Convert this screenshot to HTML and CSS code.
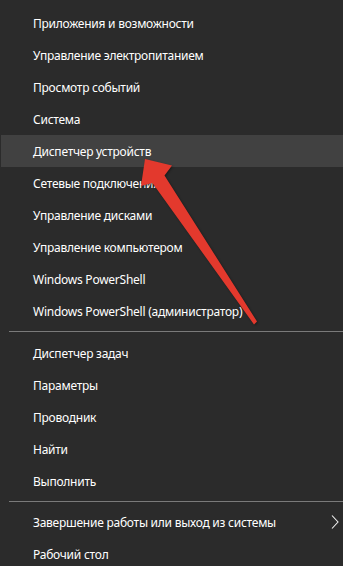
FILE: index.html
```html
<!DOCTYPE html>
<html lang="ru">

<head>
    <meta charset="UTF-8">
    <meta name="viewport" content="width=device-width, initial-scale=1.0">
    <title>Меню Win+X</title>
    <link rel="stylesheet" href="styles.css">
</head>

<body>
    <div class="menu-wrap">
        <section class="menu-group">
            <div class="menu-item">Приложения и возможности</div>
            <div class="menu-item">Управление электропитанием</div>
            <div class="menu-item">Просмотр событий</div>
            <div class="menu-item">Система</div>
            <div class="menu-item active-item">Диспетчер устройств</div>
            <div class="menu-item">Сетевые подключения</div>
            <div class="menu-item">Управление дисками</div>
            <div class="menu-item">Управление компьютером</div>
            <div class="menu-item">Windows PowerShell</div>
            <div class="menu-item">Windows PowerShell (администратор)</div>
        </section>
        <hr class="menu-sep">
        <section class="menu-group">
            <div class="menu-item">Диспетчер задач</div>
            <div class="menu-item">Параметры</div>
            <div class="menu-item">Проводник</div>
            <div class="menu-item">Найти</div>
            <div class="menu-item">Выполнить</div>
        </section>
        <hr class="menu-sep menu-sep-last">
        <section class="menu-group">
            <div class="menu-item">
                <span>Завершение работы или выход из системы</span>
                <svg class="sub-icon" width="8" height="14" viewBox="0 0 8 14">
                    <path d="M1 0.5 L7 7 L1 13.5" fill="none" stroke="#f2f2f2" stroke-width="1.1" />
                </svg>
            </div>
            <div class="menu-item">Рабочий стол</div>
        </section>

        <svg class="pointer-arrow" width="343" height="566" viewBox="0 0 343 566">
            <polygon
                points="145,159 172,165.5 164.5,175.5 257,321.5 254,324.5 152.5,183 141,186"
                fill="#e3392d" />
        </svg>
    </div>
</body>

</html>
```

FILE: styles.css
```css
html,
body {
    padding: 0;
    margin: 0;

    height: 100%;
    width: 100%;
    overflow: hidden;
}

body {
    background-color: #2b2b2b;
    font-family: "Noto Sans", "Open Sans", sans-serif;
    font-size: 12px;
    letter-spacing: -0.25px;
    color: #ffffff;
}

.menu-wrap {
    position: relative;
    height: 100%;
    padding-top: 7px;
    box-sizing: border-box;
}

.menu-item {
    display: flex;
    align-items: center;
    justify-content: space-between;

    height: 32px;
    margin-left: 1px;
    padding-left: 32px;
    padding-right: 4px;

    white-space: nowrap;
}

.active-item {
    background-color: #414141;
}

.menu-sep {
    height: 1px;
    border: 0;
    margin: 4px 0 5px 9px;
    background-color: #7a7a7a;
}

.menu-sep-last {
    margin-bottom: 4px;
}

.sub-icon {
    display: block;
}

.pointer-arrow {
    position: absolute;
    top: 0;
    left: 0;
    pointer-events: none;
    filter: drop-shadow(1px 1px 1px rgba(0, 0, 0, 0.35));
}
```
